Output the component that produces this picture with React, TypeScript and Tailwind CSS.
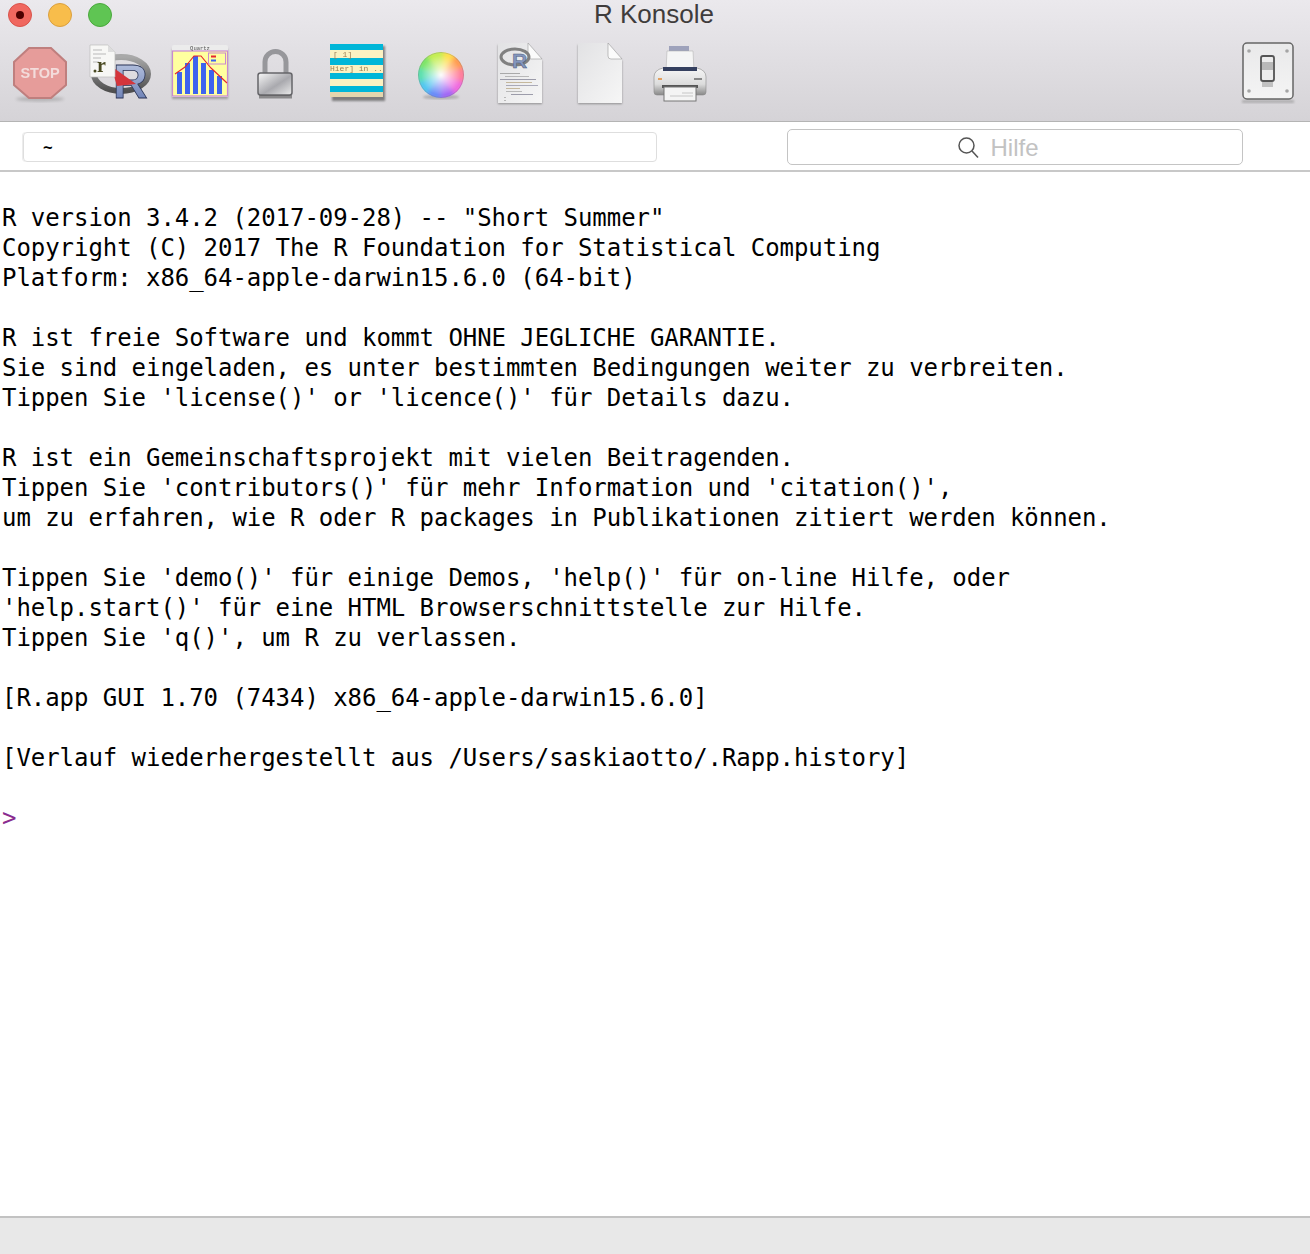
import React from "react";

const LINES = `R version 3.4.2 (2017-09-28) -- "Short Summer"
Copyright (C) 2017 The R Foundation for Statistical Computing
Platform: x86_64-apple-darwin15.6.0 (64-bit)

R ist freie Software und kommt OHNE JEGLICHE GARANTIE.
Sie sind eingeladen, es unter bestimmten Bedingungen weiter zu verbreiten.
Tippen Sie 'license()' or 'licence()' für Details dazu.

R ist ein Gemeinschaftsprojekt mit vielen Beitragenden.
Tippen Sie 'contributors()' für mehr Information und 'citation()',
um zu erfahren, wie R oder R packages in Publikationen zitiert werden können.

Tippen Sie 'demo()' für einige Demos, 'help()' für on-line Hilfe, oder
'help.start()' für eine HTML Browserschnittstelle zur Hilfe.
Tippen Sie 'q()', um R zu verlassen.

[R.app GUI 1.70 (7434) x86_64-apple-darwin15.6.0]

[Verlauf wiederhergestellt aus /Users/saskiaotto/.Rapp.history]

`;

const Blur = ({ id, s = 0.5 }: { id: string; s?: number }) => (
  <filter id={id} x="-20%" y="-20%" width="140%" height="140%">
    <feGaussianBlur stdDeviation={s} />
  </filter>
);

function StopIcon() {
  return (
    <svg width="56" height="64" viewBox="0 1 56 64">
      <defs><Blur id="s1" s={0.6} /><Blur id="s2" s={1.5} /><Blur id="s3" s={0.35} /></defs>
      <ellipse cx="28" cy="58" rx="24" ry="2.5" fill="#888" opacity="0.45" filter="url(#s2)" />
      <polygon filter="url(#s1)" points="17,7 39,7 54,21 54,44 39,57 17,57 2,44 2,21" fill="#e69c9a" stroke="#bf7f7e" strokeWidth="2" />
      <text x="28" y="37" textAnchor="middle" filter="url(#s3)" fontFamily="'Liberation Sans',sans-serif" fontWeight="700" fontSize="14.5" fill="#f3dcdb">STOP</text>
    </svg>
  );
}

function RIcon() {
  return (
    <svg width="66" height="80" viewBox="0 -8 66 80" className="overflow-visible">
      <defs>
        <Blur id="r1" s={0.4} />
        <linearGradient id="rg" x1="0" y1="0" x2="0" y2="1"><stop offset="0" stopColor="#c2cde6" /><stop offset="1" stopColor="#5f74ae" /></linearGradient>
        <linearGradient id="rr" x1="0" y1="0" x2="0" y2="1"><stop offset="0" stopColor="#a9a9a9" /><stop offset="1" stopColor="#4f4f4f" /></linearGradient>
      </defs>
      <g filter="url(#r1)">
        <ellipse cx="34" cy="32" rx="27" ry="17" fill="none" stroke="url(#rr)" strokeWidth="6" />
        <text x="26" y="56" fontFamily="'Liberation Sans',sans-serif" fontWeight="700" fontSize="48" fill="url(#rg)" stroke="#2b3555" strokeWidth="0.8">R</text>
        <polygon points="24,24 49,42 30,44" fill="#d4353a" />
        <path d="M3 3h18l7 7v25l-25 0z" fill="#f7f7f5" stroke="#bbb" strokeWidth="0.7" />
        <path d="M21 3v7h7z" fill="#ddd" />
        <path d="M6 8h9M6 12h13M6 16h8M6 20h6" stroke="#aaa" strokeWidth="0.8" />
        <text x="10" y="30" fontFamily="'Liberation Serif',serif" fontWeight="700" fontSize="20" fill="#4a4a20">r</text>
        <circle cx="8" cy="29" r="1.5" fill="#4a4a20" />
      </g>
    </svg>
  );
}

function QuartzIcon() {
  const bars: [number, number][] = [[3, 22], [11, 31], [19, 38], [27, 31], [35, 24], [43, 18]];
  return (
    <svg width="58" height="52" viewBox="2 4 56 52" className="mb-[6px] overflow-visible">
      <defs><Blur id="q1" s={0.3} /><Blur id="q2" s={1} /></defs>
      <rect x="2" y="8" width="56" height="50" fill="#777" opacity="0.6" filter="url(#q2)" />
      <g filter="url(#q1)">
        <path d="M2 6a2 2 0 0 1 2-2h52a2 2 0 0 1 2 2v50h-56z" fill="#ececec" />
        <rect x="2.5" y="10" width="55" height="45" fill="#ffff9f" stroke="#c98ad0" strokeWidth="1.2" />
        <text x="30" y="9" textAnchor="middle" fontFamily="'Liberation Mono',monospace" fontSize="5.5" fill="#555">Quartz</text>
        {bars.map(([x, h], i) => (
          <rect key={i} x={x + 4} y={53 - h} width="5" height={h} fill="#3c63ee" />
        ))}
        <path d="M5 33l10-7 9-11h7l10 12 16 15" fill="none" stroke="#e6252d" strokeWidth="1.1" />
        <rect x="38.5" y="12" width="17" height="11" fill="#ffff9f" stroke="#c98ad0" />
        <rect x="41" y="14.5" width="5" height="2" fill="#e6252d" />
        <rect x="41" y="18.5" width="5" height="2" fill="#3c63ee" />
      </g>
    </svg>
  );
}

function LockIcon() {
  return (
    <svg width="40" height="60" viewBox="0 0 40 60" className="mr-[10px]">
      <defs>
        <Blur id="l1" s={0.5} />
        <linearGradient id="lb" x1="0" y1="0" x2="1" y2="1"><stop offset="0" stopColor="#f8f8f8" /><stop offset="0.55" stopColor="#a9a9ae" /><stop offset="1" stopColor="#ececec" /></linearGradient>
      </defs>
      <g filter="url(#l1)">
        <path d="M10 30V18a10.500 10.500 0 0 1 21 0v12" fill="none" stroke="#97979b" strokeWidth="5" />
        <rect x="3" y="29" width="34" height="22" rx="2.5" fill="url(#lb)" stroke="#66666a" strokeWidth="1.5" />
        <rect x="4" y="51" width="33" height="3.5" fill="#555" opacity="0.6" />
      </g>
    </svg>
  );
}

function ListIcon() {
  return (
    <svg width="62" height="62" viewBox="2 3 62 62">
      <defs><Blur id="t1" s={0.35} /><Blur id="t2" s={1} /><Blur id="t3" s={0.5} /></defs>
      <rect x="5" y="6" width="53" height="55" fill="#666" opacity="0.8" filter="url(#t2)" />
      <g filter="url(#t1)">
        <rect x="3" y="4" width="53" height="53" fill="#fbf2c2" />
        <rect x="3" y="52" width="53" height="5" fill="#e3d6ae" />
        {[[4, 6], [18, 7], [33, 6], [46, 6]].map(([y, h]) => <rect key={y} x="3" y={y} width="53" height={h} fill="#00b6d8" />)}
      </g>
      <g filter="url(#t3)">
        <text x="6" y="16.500" fontFamily="'Liberation Mono',monospace" fontSize="8" fill="#9a7f55">[ 1]</text>
        <text x="3" y="31" fontFamily="'Liberation Mono',monospace" fontSize="8" fill="#9a7f55">Hier] in ..</text>
      </g>
    </svg>
  );
}

function ColorIcon() {
  const slices = ["#ffe04f", "#ff9d55", "#ff7f9d", "#f06de0", "#a26bf5", "#6c8cf8", "#55c7f0", "#5fe0b0", "#7fe56a", "#c5ee55"];
  return (
    <svg width="52" height="54" viewBox="-1 -2 52 54">
      <defs>
        <Blur id="c1" s={2.4} />
        <radialGradient id="cg"><stop offset="0" stopColor="#fff" stopOpacity="0.95" /><stop offset="1" stopColor="#fff" stopOpacity="0" /></radialGradient>
        <clipPath id="cc"><circle cx="26" cy="26" r="23" /></clipPath>
        <filter id="c2"><feGaussianBlur stdDeviation="1" /></filter>
      </defs>
      <ellipse cx="26" cy="48" rx="18" ry="2.500" fill="#888" opacity="0.5" filter="url(#c2)" />
      <g clipPath="url(#cc)">
        <g filter="url(#c1)">
          {slices.map((c, i) => {
            const a = (i / slices.length) * 2 * Math.PI - Math.PI / 2;
            const b = ((i + 1.2) / slices.length) * 2 * Math.PI - Math.PI / 2;
            return <path key={c} d={`M26 26L${26 + 40 * Math.cos(a)} ${26 + 40 * Math.sin(a)}L${26 + 40 * Math.cos(b)} ${26 + 40 * Math.sin(b)}Z`} fill={c} />;
          })}
        </g>
        <circle cx="26" cy="26" r="20" fill="url(#cg)" />
        <circle cx="26" cy="26" r="22.5" fill="none" stroke="#777" strokeOpacity="0.35" />
      </g>
    </svg>
  );
}

function PageBase({ id, children }: { id: string; children?: React.ReactNode }) {
  return (
    <svg width="50" height="64" viewBox="0 0 50 64">
      <defs>
        <filter id={id + "a"} x="-20%" y="-20%" width="140%" height="140%"><feGaussianBlur stdDeviation="0.8" /></filter>
        <linearGradient id={id + "g"} x1="0" y1="0" x2="1" y2="1"><stop offset="0" stopColor="#e2e2e4" /><stop offset="0.6" stopColor="#eeeeef" /><stop offset="1" stopColor="#f6f6f6" /></linearGradient>
      </defs>
      <path d="M3 3h30l14 16v43h-44z" fill="#666" opacity="0.65" filter={`url(#${id}a)`} />
      <path d="M3 1h30l14 16v44h-44z" fill={`url(#${id}g)`} />
      <path d="M33 1l14 16h-11a3 3 0 0 1-3-3z" fill="#fbfbfb" stroke="#999" strokeWidth="0.6" />
      {children}
    </svg>
  );
}

function RDocIcon() {
  const rows: [number, number, number, string][] = [[30, 3, 20, "#999"], [33, 8, 24, "#aaa"], [36, 3, 36, "#889"], [39, 9, 26, "#ba8"], [42, 9, 32, "#99a"], [45, 9, 14, "#ba8"], [48, 9, 16, "#aaa"], [51, 14, 22, "#889"], [54, 7, 2, "#aaa"], [57, 7, 2, "#aaa"]];
  return (
    <PageBase id="rd">
      <ellipse cx="20" cy="15" rx="14" ry="8" fill="none" stroke="#808080" strokeWidth="3" />
      <text x="17" y="26" fontFamily="'Liberation Sans',sans-serif" fontWeight="700" fontSize="21" fill="#8496bd" stroke="#4b5a80" strokeWidth="0.5">R</text>
      {rows.map(([y, x, w, c], i) => <rect key={i} x={x + 2} y={y + 1} width={w} height="0.8" fill={c} />)}
    </PageBase>
  );
}

function PrinterIcon() {
  return (
    <svg width="56" height="62" viewBox="0 0 56 62">
      <defs>
        <Blur id="p1" s={0.3} />
        <linearGradient id="pb" x1="0" y1="0" x2="0" y2="1"><stop offset="0" stopColor="#f6f6f6" /><stop offset="0.6" stopColor="#dcdcdc" /><stop offset="1" stopColor="#888" /></linearGradient>
      </defs>
      <g filter="url(#p1)">
        <rect x="17" y="3" width="20" height="8" fill="#9ea2bb" />
        <path d="M15 8h26l1 20h-28z" fill="#f5f5f5" stroke="#aaa" strokeWidth="0.5" />
        <path d="M2 34q0-7 9-9h34q9 2 9 9v15q0 3-3 3h-46q-3 0-3-3z" fill="url(#pb)" stroke="#8a8a8a" strokeWidth="0.6" />
        <rect x="11" y="24" width="34" height="4" fill="#34405f" />
        <rect x="6" y="35" width="4" height="2" fill="#e2a060" />
        <rect x="42" y="35" width="8" height="2" fill="#888" />
        <path d="M10 45h36v-3h-36z" fill="#555" />
        <rect x="12" y="44" width="32" height="14" fill="#f4f4f4" stroke="#777" strokeWidth="1" />
        <path d="M30 50h11M18 53h23" stroke="#bbb" strokeWidth="0.8" />
      </g>
    </svg>
  );
}

function SwitchIcon() {
  return (
    <svg width="56" height="66" viewBox="0 0 56 66">
      <defs>
        <Blur id="w1" s={0.35} /><Blur id="w2" s={0.8} />
        <linearGradient id="wb" x1="0" y1="0" x2="0" y2="1"><stop offset="0" stopColor="#e9e9ea" /><stop offset="1" stopColor="#f4f4f4" /></linearGradient>
      </defs>
      <rect x="2" y="59" width="52" height="3" fill="#888" opacity="0.5" filter="url(#w2)" />
      <g filter="url(#w1)">
        <rect x="3" y="2" width="50" height="56" rx="4" fill="url(#wb)" stroke="#666" strokeWidth="1.5" />
        {[[9, 10], [47, 10], [9, 50], [47, 50]].map(([x, y]) => <circle key={`${x}${y}`} cx={x} cy={y} r="1.8" fill="#a5a5a5" />)}
        <rect x="21" y="15" width="13" height="25" rx="2" fill="#ededed" stroke="#555" strokeWidth="1.8" />
        <rect x="22" y="21" width="11" height="8" fill="#b9b9b9" />
        <rect x="22" y="41" width="11" height="5" fill="#999" opacity="0.55" />
      </g>
    </svg>
  );
}

const TOOLS = [StopIcon, RIcon, QuartzIcon, LockIcon, ListIcon, ColorIcon, RDocIcon, () => <PageBase id="bl" />, PrinterIcon];

export default function App() {
  return (
    <div className="flex h-[1254px] w-[1310px] flex-col overflow-hidden bg-white font-['Liberation_Sans',sans-serif]">
      <header className="relative h-[122px] shrink-0 border-b border-[#b4b4b4] bg-gradient-to-b from-[#ebe9ed] to-[#d5d3d7]">
        <div className="flex h-[29px] items-center gap-4 pl-2">
          <span className="flex h-6 w-6 items-center justify-center rounded-full border border-[#d9534b] bg-[#f0675f]">
            <span className="h-2 w-2 rounded-full bg-[#4d0000]" />
          </span>
          <span className="h-6 w-6 rounded-full border border-[#dba03f] bg-[#f8bd4b]" />
          <span className="h-6 w-6 rounded-full border border-[#4aa83c] bg-[#5fc553]" />
        </div>
        <div className="absolute left-0 right-0 top-0 pr-[2px] text-center text-[26px] leading-[28px] text-[#3f3c3c]">R Konsole</div>
        <div className="flex h-[92px] items-center justify-between pb-[2px] pr-[14px]">
          <div className="flex">
            {TOOLS.map((Icon, i) => (
              <div key={i} className="flex h-[64px] w-20 items-center justify-center"><Icon /></div>
            ))}
          </div>
          <SwitchIcon />
        </div>
      </header>

      <div className="flex h-[50px] shrink-0 items-center justify-between border-b-2 border-[#c8c8c8] pl-[23px] pr-[67px] pt-[2px]">
        <div className="flex h-[30px] w-[634px] items-center rounded-[4px] border border-[#dedede] pl-[19px] pt-[2px] font-['DejaVu_Sans_Mono',monospace] text-[16px] font-bold text-black shadow-[-1px_0_0_0_#ececec]">~</div>
        <div className="flex h-[36px] w-[456px] items-center justify-center gap-[11px] rounded-[5px] border border-[#c4c4c4] pr-[34px]">
          <svg width="22" height="22" viewBox="0 0 22 22" fill="none" stroke="#555" strokeWidth="1.5">
            <circle cx="9.5" cy="9.5" r="7.5" />
            <path d="M15 15l6 6.5" />
          </svg>
          <span className="pt-[1px] text-[24px] leading-none text-[#c2c2c2]">Hilfe</span>
        </div>
      </div>

      <main className="min-h-0 flex-1 pl-[2px] pt-[31px]">
        <pre className="font-['DejaVu_Sans_Mono',monospace] text-[24px] leading-[30px] tracking-[-0.05px] text-black">{LINES}<span className="text-[#8a2c8f]">&gt;</span></pre>
      </main>

      <footer className="h-[38px] shrink-0 border-t-2 border-[#c2c2c2] bg-[#e8e8e8]" />
    </div>
  );
}
